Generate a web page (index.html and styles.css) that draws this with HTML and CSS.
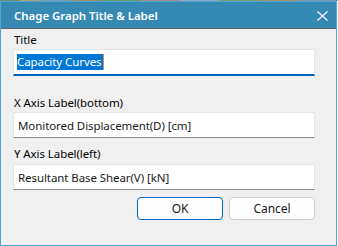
FILE: index.html
```html
<!DOCTYPE html>
<html>
<head>
<meta charset="utf-8">
<link rel="stylesheet" href="styles.css">
</head>
<body>
<div class="backdrop"></div>
<div class="window">
  <div class="titlebar">
    <span class="title">Chage Graph Title &amp; Label</span>
    <svg class="close" width="11" height="10" viewBox="0 0 11 10"><path d="M0.5 0.5 L10.5 9.5 M10.5 0.5 L0.5 9.5" stroke="#fff" stroke-width="1.1" fill="none"/></svg>
  </div>
  <div class="content">
    <div class="label">Title</div>
    <div class="field focused"><span class="sel">Capacity Curves</span></div>
    <div class="label label-x">X Axis Label(bottom)</div>
    <div class="field">Monitored Displacement(D) [cm]</div>
    <div class="label label-y">Y Axis Label(left)</div>
    <div class="field">Resultant Base Shear(V) [kN]</div>
    <div class="buttons">
      <div class="btn primary">OK</div>
      <div class="btn">Cancel</div>
    </div>
  </div>
</div>
</body>
</html>
```
FILE: styles.css
```css
html, body {
  margin: 0;
  padding: 0;
  background: #ffffff;
  width: 338px;
  height: 246px;
  overflow: hidden;
  font-family: "Noto Sans", "Open Sans", sans-serif;
}
.backdrop {
  height: 1px;
  background: linear-gradient(90deg, #6d8a72 0 20px, #b0a070 20px 40px, #7aa0b8 40px 70px, #9b8d6a 70px 100px, #6b9a6a 100px 140px, #a48a8a 140px 180px, #8aa6c0 180px 220px, #7c9a70 220px 260px, #a09070 260px 300px, #7a98b0 300px 338px);
}
.window {
  width: 335px;
  height: 243px;
  border: 1px solid #4ca6d8;
  background: #f0f0f0;
  display: flex;
  flex-direction: column;
}
.titlebar {
  height: 26px;
  background: #3689b3;
  border-bottom: 1px solid #5a6470;
  display: flex;
  align-items: center;
  justify-content: space-between;
  padding: 0 8px 0 13px;
}
.title {
  color: #ffffff;
  font-size: 11.5px;
  font-weight: 600;
  letter-spacing: -0.05px;
}
.close {
  display: block;
  margin-top: 2px;
}
.content {
  padding: 3px 21px 0 12px;
  display: flex;
  flex-direction: column;
  font-size: 11.5px;
  letter-spacing: -0.08px;
  color: #000;
}
.label {
  height: 16px;
  line-height: 16px;
  margin-bottom: 1px;
  padding-left: 1px;
}
.label-x {
  margin-top: 19px;
  margin-bottom: 1px;
}
.label-y {
  margin-top: 8px;
  margin-bottom: 2px;
}
.field {
  height: 26px;
  box-sizing: border-box;
  background: #ffffff;
  border: 1px solid #e6e6e6;
  border-bottom: 1px solid #8a8a8a;
  display: flex;
  align-items: center;
  padding-left: 4px;
  color: #1a1a1a;
}
.field.focused {
  border-bottom: 2px solid #0067c0;
  height: 27px;
  padding-left: 3px;
}
.sel {
  background: #0078d7;
  color: #ffffff;
  line-height: 16px;
  padding-right: 1px;
  border-right: 1px solid #e08a3c;
}
.buttons {
  display: flex;
  justify-content: flex-end;
  gap: 6px;
  margin-top: 7px;
}
.btn {
  width: 86px;
  height: 23px;
  box-sizing: border-box;
  border: 1px solid #d0d0d0;
  border-radius: 4px;
  background: #fdfdfd;
  display: flex;
  align-items: center;
  justify-content: center;
  color: #1a1a1a;
  font-size: 12px;
}
.btn.primary {
  border-color: #0067c0;
}
```
